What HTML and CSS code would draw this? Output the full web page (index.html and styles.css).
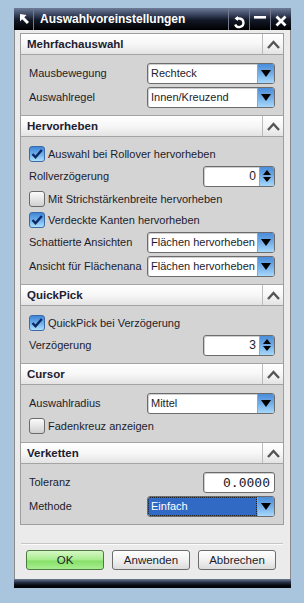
FILE: index.html
```html
<!DOCTYPE html>
<html lang="de">
<head>
<meta charset="utf-8">
<title>Auswahlvoreinstellungen</title>
<link rel="stylesheet" href="styles.css">
</head>
<body>
<div class="window">
  <div class="titlebar">
    <div class="tb-icon">
      <svg width="19" height="22" viewBox="0 0 19 22"><polygon points="6,6 12.5,7 10.3,9.2 15,13.9 12.9,16 8.2,11.3 6,13.5" fill="#fff"/></svg>
    </div>
    <div class="tb-title">Auswahlvoreinstellungen</div>
    <div class="tb-btn">
      <svg width="20" height="22" viewBox="0 0 20 22"><path d="M7 10.5 H10.5 A4.3 4.3 0 1 1 6.2 16.5" fill="none" stroke="#fff" stroke-width="2.4"/><polygon points="5.5,10.5 9,8 9,13" fill="#fff"/></svg>
    </div>
    <div class="tb-btn">
      <svg width="20" height="22" viewBox="0 0 20 22"><rect x="4" y="8" width="12" height="2.6" fill="#fff"/></svg>
    </div>
    <div class="tb-btn">
      <svg width="20" height="22" viewBox="0 0 20 22"><path d="M5.5 8.5 L14.5 17.5 M14.5 8.5 L5.5 17.5" stroke="#fff" stroke-width="2.8"/></svg>
    </div>
  </div>
  <div class="content">
    <div class="panel">
      <section class="group">
        <div class="group-head"><span class="group-title">Mehrfachauswahl</span><span class="collapse"><svg width="13" height="9" viewBox="0 0 13 9"><path d="M1 8 L6.5 2 L12 8" fill="none" stroke="#555" stroke-width="2.4"/></svg></span></div>
        <div class="group-body">
          <div class="row ctrl"><span class="label">Mausbewegung</span><div class="select"><span class="select-value">Rechteck</span><span class="select-btn"><span class="tri-down"></span></span></div></div>
          <div class="row ctrl"><span class="label">Auswahlregel</span><div class="select"><span class="select-value">Innen/Kreuzend</span><span class="select-btn"><span class="tri-down"></span></span></div></div>
        </div>
      </section>
      <section class="group">
        <div class="group-head"><span class="group-title">Hervorheben</span><span class="collapse"><svg width="13" height="9" viewBox="0 0 13 9"><path d="M1 8 L6.5 2 L12 8" fill="none" stroke="#555" stroke-width="2.4"/></svg></span></div>
        <div class="group-body">
          <div class="row cb"><span class="check on"><svg width="14" height="14" viewBox="0 0 14 14"><path d="M2.5 7 L5.5 10.3 L11.8 3" fill="none" stroke="#0c2862" stroke-width="2.4"/></svg></span><span>Auswahl bei Rollover hervorheben</span></div>
          <div class="row ctrl"><span class="label">Rollverzögerung</span><div class="spin"><span class="spin-value">0</span><span class="spin-btn"><span class="tri-up"></span><span class="tri-dn"></span></span></div></div>
          <div class="row cb"><span class="check"></span><span>Mit Strichstärkenbreite hervorheben</span></div>
          <div class="row cb"><span class="check on"><svg width="14" height="14" viewBox="0 0 14 14"><path d="M2.5 7 L5.5 10.3 L11.8 3" fill="none" stroke="#0c2862" stroke-width="2.4"/></svg></span><span>Verdeckte Kanten hervorheben</span></div>
          <div class="row ctrl"><span class="label">Schattierte Ansichten</span><div class="select"><span class="select-value">Flächen hervorheben</span><span class="select-btn"><span class="tri-down"></span></span></div></div>
          <div class="row ctrl"><span class="label">Ansicht für Flächenana</span><div class="select"><span class="select-value">Flächen hervorheben</span><span class="select-btn"><span class="tri-down"></span></span></div></div>
        </div>
      </section>
      <section class="group">
        <div class="group-head"><span class="group-title">QuickPick</span><span class="collapse"><svg width="13" height="9" viewBox="0 0 13 9"><path d="M1 8 L6.5 2 L12 8" fill="none" stroke="#555" stroke-width="2.4"/></svg></span></div>
        <div class="group-body">
          <div class="row cb"><span class="check on"><svg width="14" height="14" viewBox="0 0 14 14"><path d="M2.5 7 L5.5 10.3 L11.8 3" fill="none" stroke="#0c2862" stroke-width="2.4"/></svg></span><span>QuickPick bei Verzögerung</span></div>
          <div class="row ctrl"><span class="label">Verzögerung</span><div class="spin"><span class="spin-value">3</span><span class="spin-btn"><span class="tri-up"></span><span class="tri-dn"></span></span></div></div>
        </div>
      </section>
      <section class="group">
        <div class="group-head"><span class="group-title">Cursor</span><span class="collapse"><svg width="13" height="9" viewBox="0 0 13 9"><path d="M1 8 L6.5 2 L12 8" fill="none" stroke="#555" stroke-width="2.4"/></svg></span></div>
        <div class="group-body">
          <div class="row ctrl"><span class="label">Auswahlradius</span><div class="select"><span class="select-value">Mittel</span><span class="select-btn"><span class="tri-down"></span></span></div></div>
          <div class="row cb"><span class="check"></span><span>Fadenkreuz anzeigen</span></div>
        </div>
      </section>
      <section class="group last">
        <div class="group-head"><span class="group-title">Verketten</span><span class="collapse"><svg width="13" height="9" viewBox="0 0 13 9"><path d="M1 8 L6.5 2 L12 8" fill="none" stroke="#555" stroke-width="2.4"/></svg></span></div>
        <div class="group-body">
          <div class="row ctrl"><span class="label">Toleranz</span><div class="field"><span class="field-value">0.0000</span></div></div>
          <div class="row ctrl"><span class="label">Methode</span><div class="select"><span class="select-value focus">Einfach</span><span class="select-btn"><span class="tri-down"></span></span></div></div>
        </div>
      </section>
    </div>
    <div class="separator"></div>
    <div class="buttons">
      <button class="btn btn-ok">OK</button>
      <button class="btn">Anwenden</button>
      <button class="btn">Abbrechen</button>
    </div>
  </div>
  <div class="bottombar"></div>
</div>
</body>
</html>
```
FILE: styles.css
```css
* { box-sizing: border-box; }
html, body { margin: 0; padding: 0; }
body {
  background: #a9c5dd;
  font-family: "Liberation Sans", Arial, sans-serif;
  font-size: 11px;
  color: #1c1c2c;
  height: 603px;
  overflow: hidden;
}
.window {
  width: 277px;
  margin: 8px 0 0 14px;
}
.titlebar {
  height: 22px;
  display: flex;
  color: #fff;
  background: linear-gradient(#6f7c97 0%, #3a4560 30%, #121826 55%, #000 100%);
}
.tb-icon {
  width: 20px;
  border-right: 1px solid #737a8c;
  display: flex;
  align-items: center;
  justify-content: center;
}
.tb-title {
  flex: 1;
  font-weight: bold;
  font-size: 12px;
  line-height: 22px;
  padding-left: 6px;
}
.tb-btn {
  width: 21px;
  border-left: 1px solid #737a8c;
  display: flex;
  align-items: center;
  justify-content: center;
}
.content {
  background: #ebebeb;
  border-left: 1px solid #8a8a8a;
  border-right: 1px solid #8a8a8a;
  padding: 3px 6px 9px 5px;
}
.panel {
  border: 1px solid #9e9e9e;
}
.group-head {
  height: 21px;
  display: flex;
  border-bottom: 1px solid #a4a4a4;
  background: linear-gradient(#ffffff 0%, #f7f7f7 50%, #e3e3e3 100%);
}
.group-title {
  flex: 1;
  font-weight: bold;
  font-size: 11.5px;
  line-height: 20px;
  padding-left: 6px;
  color: #202030;
}
.collapse {
  width: 21px;
  border-left: 1px solid #bcbcbc;
  display: flex;
  align-items: center;
  justify-content: center;
}
.group-body {
  background: #d4d4d4;
  padding: 6px 8px 6px 8px;
  border-bottom: 1px solid #a4a4a4;
}
.group.last .group-body { border-bottom: none; }
.row {
  display: flex;
  align-items: center;
}
.row.ctrl { height: 24px; justify-content: space-between; }
.row.cb { height: 21px; }
.label { white-space: nowrap; }
.select {
  width: 128px;
  height: 21px;
  display: flex;
  border: 1px solid #6c6c6c;
  border-radius: 3px;
  background: #fff;
  box-shadow: inset 1px 1px 0 #cfcfcf;
  overflow: hidden;
}
.select-value {
  flex: 1;
  min-width: 0;
  padding-left: 3px;
  line-height: 19px;
  font-size: 11px;
  white-space: nowrap;
  overflow: hidden;
}
.select-value.focus {
  background: #316ac5;
  color: #fff;
  outline: 1px dotted #202020;
  outline-offset: -1px;
  border-radius: 2px 0 0 2px;
}
.select-btn {
  width: 17px;
  flex: none;
  border-left: 1px solid #8aa8c8;
  background: linear-gradient(#4b8ddb 0%, #6eaae6 45%, #a7d8fb 100%);
  display: flex;
  align-items: center;
  justify-content: center;
}
.tri-down {
  width: 0;
  height: 0;
  border-left: 5px solid transparent;
  border-right: 5px solid transparent;
  border-top: 7px solid #000;
}
.spin, .field {
  width: 72px;
  height: 21px;
  display: flex;
  border: 1px solid #6c6c6c;
  border-radius: 3px;
  background: #fff;
  box-shadow: inset 1px 1px 0 #cfcfcf;
  overflow: hidden;
}
.spin-value {
  flex: 1;
  text-align: right;
  padding-right: 3px;
  line-height: 19px;
  font-size: 12px;
}
.spin-btn {
  width: 15px;
  border-left: 1px solid #8aa8c8;
  background: linear-gradient(#4b8ddb 0%, #6eaae6 45%, #a7d8fb 100%);
  display: flex;
  flex-direction: column;
  align-items: center;
  justify-content: center;
  gap: 2px;
}
.tri-up {
  width: 0;
  height: 0;
  border-left: 4px solid transparent;
  border-right: 4px solid transparent;
  border-bottom: 5px solid #000;
}
.tri-dn {
  width: 0;
  height: 0;
  border-left: 4px solid transparent;
  border-right: 4px solid transparent;
  border-top: 5px solid #000;
}
.field-value {
  flex: 1;
  text-align: right;
  padding-right: 4px;
  line-height: 19px;
  font-family: "DejaVu Sans Mono", "Liberation Mono", monospace;
  font-size: 13px;
}
.check {
  width: 16px;
  height: 16px;
  margin-right: 3px;
  border: 1px solid #6a6a6a;
  border-radius: 3px;
  background: linear-gradient(#fbfbfb, #d0d0d0);
  display: flex;
  align-items: center;
  justify-content: center;
  flex: none;
}
.check.on {
  border-color: #3a6aa8;
  background: linear-gradient(#3f86d8 0%, #72b2ec 55%, #b0e0fb 100%);
}
.separator {
  margin: 18px 1px 0 1px;
  border-top: 1px solid #c6c6c6;
  border-bottom: 1px solid #fbfbfb;
}
.buttons {
  display: flex;
  gap: 8px;
  padding-left: 6px;
  margin-top: 5px;
}
.btn {
  width: 78px;
  height: 20px;
  margin: 0;
  padding: 0;
  border: 1px solid #6c6c6c;
  border-radius: 3px;
  background: linear-gradient(#ffffff 0%, #f1f1f1 50%, #dcdcdc 100%);
  font-family: "Liberation Sans", Arial, sans-serif;
  font-size: 11.5px;
  color: #1c1c2c;
}
.btn-ok {
  border-color: #4c7a40;
  background: linear-gradient(#d6f7c6 0%, #a6ec8c 50%, #86e068 55%, #a8ee90 100%);
}
.bottombar {
  height: 9px;
  background: linear-gradient(#6f7c97 0%, #2a3348 35%, #050810 70%, #000 100%);
}
```
